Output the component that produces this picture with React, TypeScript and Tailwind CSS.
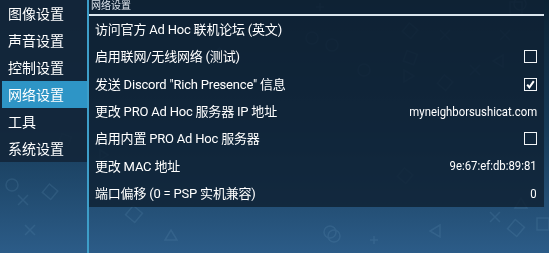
import React from "react";

const side = ["图像设置", "声音设置", "控制设置", "网络设置", "工具", "系统设置"];

type Row = { label: string; kind?: "check" | "checked" | "text"; value?: string };
const rows: Row[] = [
  { label: "访问官方 Ad Hoc 联机论坛 (英文)" },
  { label: "启用联网/无线网络 (测试)", kind: "check" },
  { label: "发送 Discord \"Rich Presence\" 信息", kind: "checked" },
  { label: "更改 PRO Ad Hoc 服务器 IP 地址", kind: "text", value: "myneighborsushicat.com" },
  { label: "启用内置 PRO Ad Hoc 服务器", kind: "check" },
  { label: "更改 MAC 地址", kind: "text", value: "9e:67:ef:db:89:81" },
  { label: "端口偏移 (0 = PSP 实机兼容)", kind: "text", value: "0" },
];

function Box({ checked }: { checked?: boolean }) {
  return (
    <div className="w-[13px] h-[13px] border-[1.5px] border-[#f2f5f7] flex items-center justify-center">
      {checked && (
        <svg width="9" height="9" viewBox="0 0 9 9">
          <path d="M1.2 4.6 L3.4 7.4 L7.8 1.2" fill="none" stroke="#ffffff" strokeWidth="2" />
        </svg>
      )}
    </div>
  );
}

function Bg() {
  const s = "#7fb0d0";
  return (
    <svg className="absolute inset-0" width="549" height="253" viewBox="0 0 549 253">
      <g fill="none" stroke={s} strokeWidth="1.5" opacity="0.14">
        <circle cx="312" cy="38" r="6" />
        <circle cx="332" cy="45" r="6" />
        <rect x="405" y="25" width="11" height="11" transform="rotate(40 410 30)" />
        <path d="M440 30 l10 10 M450 30 l-10 10" />
        <path d="M500 30 l10 10 M510 30 l-10 10" />
        <path d="M470 65 l10 10 M480 65 l-10 10" />
        <circle cx="364" cy="70" r="6" />
        <rect x="405" y="52" width="11" height="11" transform="rotate(20 410 57)" />
        <path d="M404 70 l10 6 l-10 6 z" />
        <rect x="440" y="77" width="11" height="11" transform="rotate(40 445 82)" />
        <path d="M503 55 l-10 6 l10 6 z" />
        <rect x="510" y="2" width="12" height="12" />
        <circle cx="520" cy="4" r="6" />
        <path d="M320 3 l0 8 M316 7 l8 0" />
        <circle cx="12" cy="185" r="6" />
        <path d="M18 195 l10 10 M28 195 l-10 10" />
        <rect x="45" y="186" width="11" height="11" transform="rotate(40 50 191)" />
        <path d="M25 225 l10 10 M35 225 l-10 10" />
        <rect x="128" y="208" width="12" height="12" transform="rotate(40 134 214)" />
        <circle cx="330" cy="232" r="6" />
        <circle cx="334" cy="236" r="6" />
        <path d="M440 225 l-10 6 l10 6 z" />
        <rect x="510" y="222" width="12" height="12" transform="rotate(40 516 228)" />
        <path d="M515 208 l6 -10 l6 10 z" />
        <path d="M490 212 l10 10 M500 212 l-10 10" />
        <rect x="537" y="218" width="12" height="12" />
        <path d="M370 240 l8 0 M374 236 l0 8" />
        <path d="M165 240 l6 -10 l6 10 z" />
        <path d="M100 150 l8 5 l-8 5 z" />
        <rect x="400" y="170" width="11" height="11" transform="rotate(40 405 175)" />
        <path d="M150 30 l8 8 M158 30 l-8 8" />
        <rect x="215" y="50" width="10" height="10" transform="rotate(40 220 55)" />
        <path d="M55 10 l10 10 M65 10 l-10 10" />
        <rect x="60" y="135" width="10" height="10" transform="rotate(20 65 140)" />
      </g>
    </svg>
  );
}

export default function App() {
  return (
    <div className="relative w-[549px] h-[253px] overflow-hidden bg-gradient-to-b from-[#0c2233] via-[#163a57] to-[#2c5c88] font-['Roboto','Noto_Sans_CJK_SC',sans-serif] text-white">
      <Bg />
      <div className="relative flex h-full">
        <div className="w-[87px] h-[162px] bg-[#13263a]/90 flex flex-col">
          {side.map((t, i) => (
            <div
              key={t}
              className={
                "h-[27px] flex items-center text-[14px] leading-none " +
                (i === 3 ? "ml-[2px] pl-[6px] bg-[#2e95c6]" : "pl-[8px]")
              }
            >
              {t}
            </div>
          ))}
        </div>
        <div className="w-[2px] h-full bg-[#3d9ec9]" />
        <div className="w-[455px] h-[207px] bg-[#0f2235]/85 flex flex-col">
          <div className="h-[14px] pl-[2px] text-[10px] leading-[12px] text-[#dde5ec]">网络设置</div>
          <div className="h-[2px] bg-[#dbe6ee]" />
          {rows.map((r) => (
            <div key={r.label} className="h-[27.3px] flex items-center justify-between pl-[6px] pr-[7px] text-[13px] leading-none">
              <span className="tracking-[-0.2px]">{r.label}</span>
              {r.kind === "check" && <Box />}
              {r.kind === "checked" && <Box checked />}
              {r.kind === "text" && (
                <span className="inline-block scale-x-[0.84] origin-right text-[13.5px]">{r.value}</span>
              )}
            </div>
          ))}
        </div>
      </div>
    </div>
  );
}
